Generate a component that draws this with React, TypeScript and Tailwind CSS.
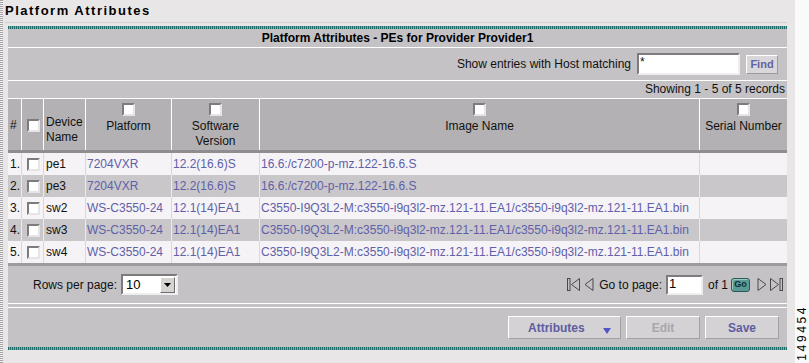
import React from "react";

type Row = { n: string; name: string; platform: string; sw: string; image: string };

const rows: Row[] = [
  { n: "1.", name: "pe1", platform: "7204VXR", sw: "12.2(16.6)S", image: "16.6:/c7200-p-mz.122-16.6.S" },
  { n: "2.", name: "pe3", platform: "7204VXR", sw: "12.2(16.6)S", image: "16.6:/c7200-p-mz.122-16.6.S" },
  { n: "3.", name: "sw2", platform: "WS-C3550-24", sw: "12.1(14)EA1", image: "C3550-I9Q3L2-M:c3550-i9q3l2-mz.121-11.EA1/c3550-i9q3l2-mz.121-11.EA1.bin" },
  { n: "4.", name: "sw3", platform: "WS-C3550-24", sw: "12.1(14)EA1", image: "C3550-I9Q3L2-M:c3550-i9q3l2-mz.121-11.EA1/c3550-i9q3l2-mz.121-11.EA1.bin" },
  { n: "5.", name: "sw4", platform: "WS-C3550-24", sw: "12.1(14)EA1", image: "C3550-I9Q3L2-M:c3550-i9q3l2-mz.121-11.EA1/c3550-i9q3l2-mz.121-11.EA1.bin" },
];

function Check() {
  return (
    <span className="inline-block w-[13px] h-[13px] bg-white border-2 border-t-[#7d7b7e] border-l-[#7d7b7e] border-r-[#e6e4e6] border-b-[#e6e4e6]" />
  );
}

function Teal() {
  return (
    <div className="h-[3px] bg-[repeating-linear-gradient(90deg,#1f6d6a_0px,#1f6d6a_1px,#78aeab_1px,#78aeab_2px)]" />
  );
}

const cols = "grid grid-cols-[13px_22px_42px_86px_88px_440px_88px]";

export default function App() {
  return (
    <div className="w-[809px] h-[363px] flex bg-[#e9e6e8] font-['Liberation_Sans',Arial,sans-serif] text-[12px] text-[#111] overflow-hidden">
      {/* left dotted edge */}
      <div className="w-[3px] h-full bg-[repeating-linear-gradient(180deg,#a5a3a5_0px,#a5a3a5_1px,#f2f0f2_1px,#f2f0f2_2px)]" />

      {/* main */}
      <div className="w-[792px] flex flex-col">
        <div className="ml-[2px] w-[782px] h-[23px] border-b border-[#d9cfd0] pt-[2px]">
          <span className="font-bold text-[13px] tracking-[1.5px] text-black leading-[16px]">Platform Attributes</span>
        </div>

        <div className="ml-[5px] mt-[3px] w-[779px] flex flex-col">
          <Teal />
          <div className="h-[18px] bg-[#c4c2c5] text-center font-bold leading-[18px] text-black">
            Platform Attributes - PEs for Provider Provider1
          </div>
          <div className="h-[33px] border-t border-white bg-[#c4c2c5] flex items-center justify-end pr-[9px]">
            <span className="mr-[6px]">Show entries with Host matching</span>
            <div className="w-[103px] h-[22px] bg-white border-2 border-t-[#7d7b7e] border-l-[#7d7b7e] border-r-[#eeeeee] border-b-[#eeeeee] leading-[14px] pl-[1px] text-[12px]">
              *
            </div>
            <div className="ml-[6px] w-[32px] h-[19px] bg-[#d9d7da] border border-t-white border-l-white border-r-[#9c9a9d] border-b-[#9c9a9d] flex items-center justify-center text-[11px] font-bold text-[#6262a2]">
              Find
            </div>
          </div>
          <div className="h-[18px] border-t border-white bg-[#c4c2c5] flex items-center justify-end pr-[2px] leading-[17px]">
            Showing 1 - 5 of 5 records
          </div>

          {/* table header */}
          <div className={`${cols} h-[52px] border-t border-white bg-[#b3b1b4]`}>
            <div className="flex items-center pl-[2px] pt-[1px]">#</div>
            <div className="border-l border-white flex items-center pl-[5px] pt-[1px]">
              <Check />
            </div>
            <div className="border-l border-white pl-[2px] pt-[16px] leading-[15px]">
              Device
              <br />
              Name
            </div>
            <div className="border-l border-white flex flex-col items-center pt-[4px] leading-[15px]">
              <Check />
              <span className="mt-[3px]">Platform</span>
            </div>
            <div className="border-l border-white flex flex-col items-center pt-[4px] leading-[15px] text-center">
              <Check />
              <span className="mt-[3px]">
                Software
                <br />
                Version
              </span>
            </div>
            <div className="border-l border-white flex flex-col items-center pt-[4px] leading-[15px]">
              <Check />
              <span className="mt-[3px]">Image Name</span>
            </div>
            <div className="border-l border-white flex flex-col items-center pt-[4px] leading-[15px]">
              <Check />
              <span className="mt-[3px]">Serial Number</span>
            </div>
          </div>
          <div className="h-[3px] bg-[#8f8d90]" />

          {/* rows */}
          {rows.map((r, i) => {
            const dark = i % 2 === 1;
            const bg = dark ? "bg-[#c9c7ca]" : "bg-[#f5f3f6]";
            const bl = dark ? "border-l border-[#eceaec]" : "border-l border-[#d9d7da]";
            return (
              <div key={i} className={`${cols} h-[22px] ${bg} leading-[22px] whitespace-nowrap`}>
                <div className="pl-[2px]">{r.n}</div>
                <div className={`${bl} flex items-center pl-[5px]`}>
                  <Check />
                </div>
                <div className={`${bl} pl-[2px]`}>{r.name}</div>
                <div className={`${bl} pl-[1px] text-[#6060a8]`}>{r.platform}</div>
                <div className={`${bl} pl-[1px] text-[#6060a8]`}>{r.sw}</div>
                <div className={`${bl} pl-[1px] text-[#6060a8] overflow-hidden`}>{r.image}</div>
                <div className={`${bl}`} />
              </div>
            );
          })}
          <div className="h-[3px] bg-[#9d9b9e]" />

          {/* pagination */}
          <div className="h-[37px] bg-[#c4c2c5] flex items-center justify-between pl-[25px] pr-[4px]">
            <div className="flex items-center">
              <span>Rows per page:</span>
              <div className="ml-[4px] w-[57px] h-[21px] bg-white border-2 border-t-[#7d7b7e] border-l-[#7d7b7e] border-r-[#eeeeee] border-b-[#eeeeee] flex items-center justify-between">
                <span className="pl-[3px] text-[13px] text-black">10</span>
                <span className="w-[15px] h-[16px] mr-[1px] bg-[#d6d3d0] border border-t-white border-l-white border-r-[#6e6c6e] border-b-[#6e6c6e] flex items-center justify-center">
                  <svg width="7" height="4" viewBox="0 0 7 4">
                    <path d="M0 0 L7 0 L3.5 4 Z" fill="#000" />
                  </svg>
                </span>
              </div>
            </div>
            <div className="flex items-center">
              <svg width="13" height="13" viewBox="0 0 13 13">
                <rect x="0.5" y="0.5" width="2.5" height="12" fill="none" stroke="#4a484b" />
                <path d="M12.5 0.5 L4.5 6.5 L12.5 12.5 Z" fill="none" stroke="#4a484b" />
              </svg>
              <svg className="ml-[4px]" width="10" height="13" viewBox="0 0 10 13">
                <path d="M9 0.5 L1 6.5 L9 12.5 Z" fill="none" stroke="#4a484b" />
              </svg>
              <span className="ml-[5px]">Go to page:</span>
              <div className="ml-[4px] w-[37px] h-[20px] bg-white border-2 border-t-[#7d7b7e] border-l-[#7d7b7e] border-r-[#eeeeee] border-b-[#eeeeee] leading-[14px] pl-[1px] text-[13px] text-black">
                1
              </div>
              <span className="ml-[5px]">of 1</span>
              <span className="ml-[3px] w-[19px] h-[14px] rounded-[3px] bg-[#5a9996] border border-[#2a5a58] shadow-[inset_1px_1px_0_#9cc8c5] flex items-center justify-center text-[9px] font-bold text-[#0f2e2d] leading-none">
                Go
              </span>
              <svg className="ml-[7px]" width="10" height="13" viewBox="0 0 10 13">
                <path d="M1 0.5 L9 6.5 L1 12.5 Z" fill="none" stroke="#4a484b" />
              </svg>
              <svg className="ml-[3px]" width="13" height="13" viewBox="0 0 13 13">
                <path d="M0.5 0.5 L8.5 6.5 L0.5 12.5 Z" fill="none" stroke="#4a484b" />
                <rect x="10" y="0.5" width="2.5" height="12" fill="none" stroke="#4a484b" />
              </svg>
            </div>
          </div>
          <div className="h-[5px] bg-[#c4c2c5] border-t border-b border-white" />

          {/* buttons */}
          <div className="h-[39px] bg-[#c4c2c5] flex items-center justify-end pr-[8px] gap-[5px]">
            <div className="relative w-[113px] h-[23px] bg-[#d4d2d5] border border-t-white border-l-white border-r-[#a3a1a4] border-b-[#a3a1a4] flex items-center pl-[19px] font-bold text-[#5d5d9f]">
              Attributes
              <svg className="absolute right-[9px] top-[11px]" width="8" height="6" viewBox="0 0 8 6">
                <path d="M0 0 L8 0 L4 6 Z" fill="#5454c4" />
              </svg>
            </div>
            <div className="w-[74px] h-[23px] bg-[#d4d2d5] border border-t-white border-l-white border-r-[#a3a1a4] border-b-[#a3a1a4] flex items-center justify-center font-bold text-[#a9a7aa]">
              Edit
            </div>
            <div className="w-[74px] h-[23px] bg-[#d4d2d5] border border-t-white border-l-white border-r-[#a3a1a4] border-b-[#a3a1a4] flex items-center justify-center font-bold text-[#5d5d9f]">
              Save
            </div>
          </div>
          <Teal />
        </div>
      </div>

      {/* right strip */}
      <div className="w-[14px] h-full bg-[#fafafa] flex flex-col justify-end items-center pb-[2px]">
        <span className="[writing-mode:vertical-rl] rotate-180 text-[12px] tracking-[2.6px] text-black leading-[12px]">
          149454
        </span>
      </div>
    </div>
  );
}
